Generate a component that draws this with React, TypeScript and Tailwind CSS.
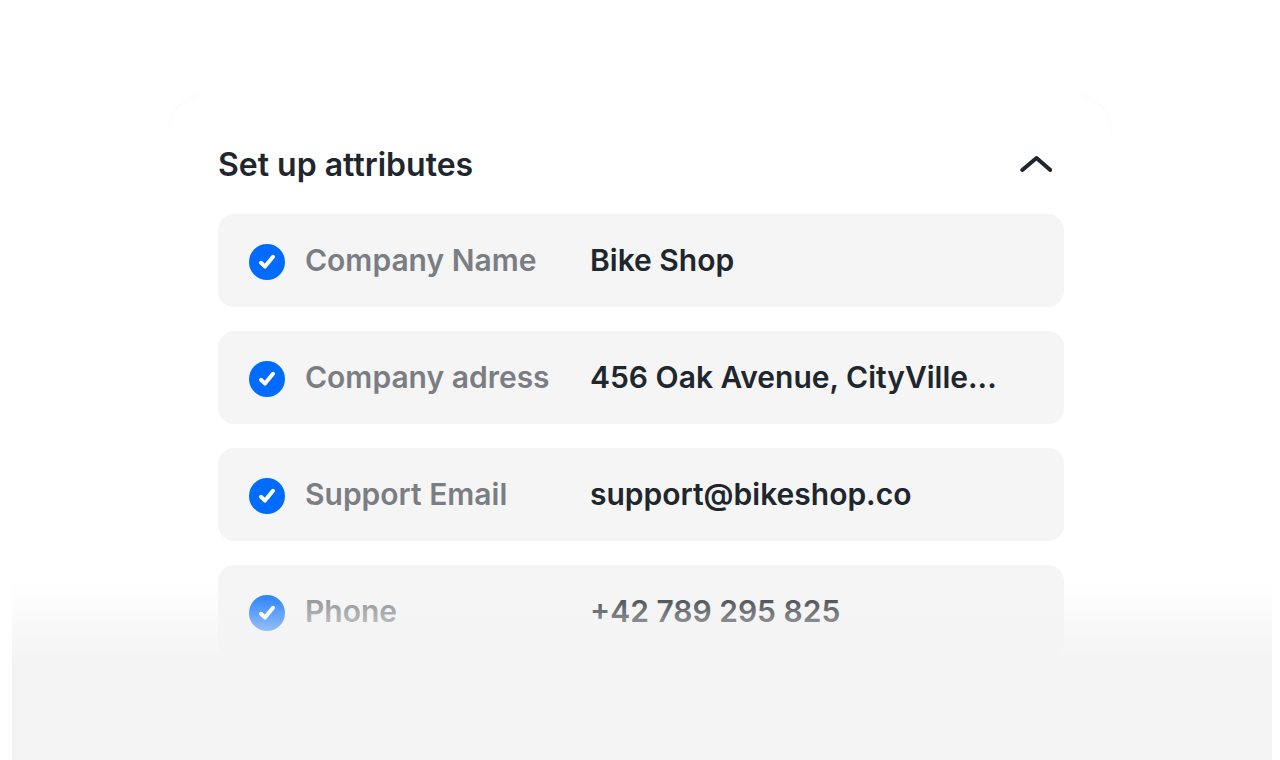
type Attribute = { id: string; label: string; value: string };

const attributes: Attribute[] = [
  { id: "company-name", label: "Company Name", value: "Bike Shop" },
  { id: "company-address", label: "Company adress", value: "456 Oak Avenue, CityVille..." },
  { id: "support-email", label: "Support Email", value: "support@bikeshop.co" },
  { id: "phone", label: "Phone", value: "+42 789 295 825" },
];

function CheckCircle({ id }: { id: string }) {
  return (
    <span className="relative mt-0.5 size-9 shrink-0">
      <input
        id={id}
        type="checkbox"
        defaultChecked
        className="peer block size-9 cursor-pointer appearance-none rounded-full bg-gray-300 checked:bg-[#006bff]"
      />
      <svg
        viewBox="0 0 36 36"
        fill="none"
        aria-hidden="true"
        className="pointer-events-none absolute inset-0 hidden size-9 peer-checked:block"
      >
        <path
          d="M12 18.8 L16 22.6 L24 12.8"
          stroke="white"
          strokeWidth="4"
          strokeLinecap="round"
          strokeLinejoin="round"
        />
      </svg>
    </span>
  );
}

function AttributeRow({ id, label, value }: Attribute) {
  return (
    <li className="flex h-[93px] items-center rounded-2xl bg-[#f5f5f5] px-[31px]">
      <CheckCircle id={id} />
      <label htmlFor={id} className="ml-5 w-[285px] shrink-0 pb-0.5 text-[#7a7e83]">
        {label}
      </label>
      <span className="min-w-0 truncate pb-0.5 text-[#20262d]">{value}</span>
    </li>
  );
}

function CornerArc({ className }: { className: string }) {
  return (
    <svg viewBox="0 0 38 38" fill="none" aria-hidden="true" className={className}>
      <path d="M0.5 38 A37.5 37.5 0 0 1 34 0.7" stroke="#f9f9f9" strokeDasharray="3 1" />
    </svg>
  );
}

export default function App() {
  return (
    <main className="relative flex min-h-screen flex-col overflow-hidden bg-white pt-[94px] font-['Inter',sans-serif] font-semibold">
      <section className="relative mx-auto w-full max-w-[944px] flex-1 rounded-t-[38px] bg-white pr-12 pb-24 pl-[50px]">
        <CornerArc className="absolute top-0 left-0 size-[38px]" />
        <CornerArc className="absolute top-0 right-0 size-[38px] -scale-x-100" />
        <header className="flex h-[120px] items-center justify-between pt-[22px] pr-3">
          <h1 className="text-[32px] leading-10 text-[#20262d]">Set up attributes</h1>
          <button type="button" aria-label="Collapse" className="cursor-pointer">
            <svg viewBox="0 0 32 20" fill="none" aria-hidden="true" className="h-5 w-8">
              <path
                d="M2.3 15 L16.5 3 L30.3 15"
                stroke="#20262d"
                strokeWidth="4"
                strokeLinecap="round"
                strokeLinejoin="round"
              />
            </svg>
          </button>
        </header>
        <ul className="flex flex-col gap-6 text-[30px] leading-9">
          {attributes.map((attribute) => (
            <AttributeRow key={attribute.id} {...attribute} />
          ))}
        </ul>
      </section>
      <div className="pointer-events-none absolute right-2 bottom-0 left-3 h-[180px] bg-linear-to-b from-[#f4f4f4]/0 to-[#f4f4f4] to-[84px]" />
    </main>
  );
}
